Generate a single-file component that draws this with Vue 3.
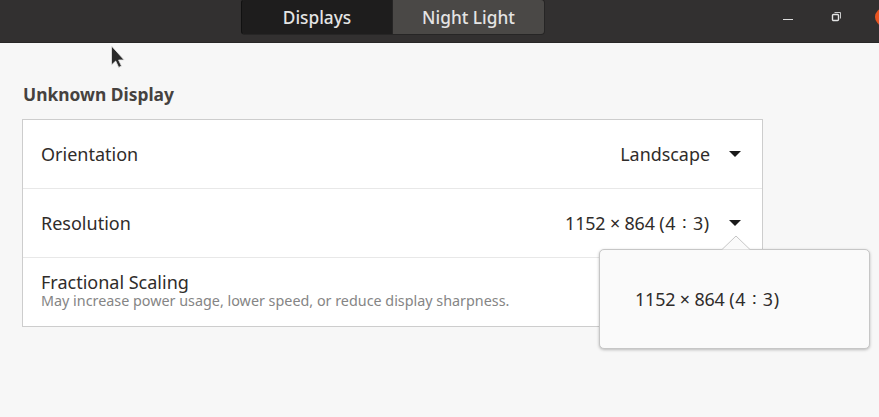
<script setup>
const rows = [
  { label: 'Orientation', value: 'Landscape' },
  { label: 'Resolution', value: '1152 × 864', ratio: '(4 ∶ 3)' },
  { label: 'Fractional Scaling', hint: 'May increase power usage, lower speed, or reduce display sharpness.' }
]
</script>

<template>
  <div class="window">
    <header class="titlebar">
      <div class="tabs">
        <button class="tab active">Displays</button>
        <button class="tab">Night Light</button>
      </div>
      <div class="controls">
        <span class="minimize"></span>
        <svg class="restore" width="11" height="11" viewBox="0 0 11 11">
          <path d="M3.5 1.5h6v6" fill="none" stroke="#c9c9c9" stroke-width="1" />
          <rect x="1.5" y="3.5" width="6" height="6" rx="1" fill="none" stroke="#e4e4e4" stroke-width="1.4" />
        </svg>
        <span class="close"></span>
      </div>
    </header>

    <main class="content">
      <h2 class="title">Unknown Display</h2>
      <section class="card">
        <div class="row" v-for="row in rows" :key="row.label">
          <div class="labels">
            <span class="label">{{ row.label }}</span>
            <span class="hint" v-if="row.hint">{{ row.hint }}</span>
          </div>
          <div class="value" v-if="row.value">
            <span :class="{ size: row.ratio }">{{ row.value }} <span class="ratio" v-if="row.ratio">{{ row.ratio }}</span></span>
            <i class="caret"></i>
          </div>
        </div>
      </section>
    </main>

    <svg class="cursor" width="16" height="24" viewBox="0 0 16 24">
      <path d="M1.5 1v19l4.2-4 3 6.4 2.8-1.3-2.9-6.1h5.6z" fill="#2a2a2a" stroke="#e8e8e8" stroke-width="0.8" />
    </svg>

    <div class="popover">
      <svg class="arrow" width="28" height="15" viewBox="0 0 28 15">
        <path d="M0 14.5 14 1l14 13.5" fill="#fafafa" stroke="#c6c6c6" stroke-width="1" />
      </svg>
      <span class="size">1152 × 864 <span class="ratio">(4 ∶ 3)</span></span>
    </div>
  </div>
</template>

<style>
html, body {
  margin: 0;
  background: #f6f6f6;
}
</style>

<style scoped>
.window {
  position: relative;
  width: 879px;
  height: 417px;
  overflow: hidden;
  background: #f7f7f7;
  font-family: "Noto Sans", "Open Sans", sans-serif;
  color: #2f2c2a;
}
.titlebar {
  position: relative;
  height: 42px;
  background: #323030;
  border-bottom: 1px solid #282727;
  display: flex;
  justify-content: center;
}
.tabs {
  position: absolute;
  left: 241px;
  top: -1px;
  display: flex;
  height: 36px;
}
.tab {
  border: 1px solid #262525;
  border-radius: 0 4px 4px 0;
  border-left: none;
  width: 152px;
  padding: 0;
  background: #4a4846;
  color: #e4e4e4;
  font: 500 17.3px "Noto Sans", sans-serif;
}
.tab.active {
  width: 152px;
  border-left: 1px solid #111;
  border-radius: 4px 0 0 4px;
  background: #1e1d1d;
}
.controls {
  position: absolute;
  inset: 0;
}
.minimize {
  position: absolute;
  left: 783px;
  top: 19px;
  width: 10px;
  height: 1px;
  background: #dcdcdc;
}
.restore {
  position: absolute;
  left: 831px;
  top: 11px;
}
.close {
  position: absolute;
  left: 875px;
  top: 8px;
  width: 18px;
  height: 18px;
  border-radius: 50%;
  background: #e95420;
}
.content {
  padding: 40px 116px 0 22px;
}
.title {
  margin: 0 0 14px 1px;
  font-size: 17.4px;
  line-height: 22px;
  font-weight: 700;
  color: #46423f;
}
.card {
  background: #fff;
  border: 1px solid #cdcdcd;
  border-bottom-width: 1.5px;
}
.row {
  height: 68px;
  padding: 0 21px 0 18px;
  display: flex;
  align-items: center;
  justify-content: space-between;
  border-bottom: 1px solid #e8e8e8;
}
.row:last-child {
  border-bottom: none;
}
.row:last-child .labels {
  padding-bottom: 3px;
}
.labels {
  display: flex;
  flex-direction: column;
  padding-bottom: 1px;
}
.label {
  font-size: 18px;
  line-height: 20px;
}
.hint {
  margin-top: 1px;
  font-size: 14.35px;
  line-height: 16px;
  color: #858585;
}
.value {
  display: flex;
  align-items: center;
  gap: 19px;
  font-size: 17.9px;
}
.size {
  letter-spacing: -0.15px;
}
.ratio {
  letter-spacing: 0.75px;
}
.caret {
  width: 0;
  height: 0;
  border-left: 6px solid transparent;
  border-right: 6px solid transparent;
  border-top: 6px solid #1a1a1a;
}
.cursor {
  position: absolute;
  left: 110px;
  top: 45px;
}
.popover {
  position: absolute;
  left: 599px;
  top: 249px;
  width: 271px;
  height: 100px;
  box-sizing: border-box;
  display: flex;
  align-items: center;
  padding-left: 35px;
  background: #fafafa;
  border: 1px solid #c6c6c6;
  border-radius: 5px;
  box-shadow: 0 1px 3px rgba(0, 0, 0, 0.25);
  font-size: 17.9px;
}
.arrow {
  position: absolute;
  left: 122px;
  top: -15px;
}
</style>
